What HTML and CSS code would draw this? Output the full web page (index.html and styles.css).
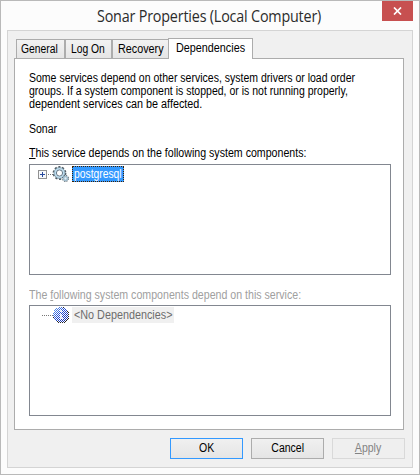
FILE: index.html
```html
<!DOCTYPE html>
<html lang="en">
<head>
<meta charset="utf-8">
<title>Sonar Properties (Local Computer)</title>
<link rel="stylesheet" href="styles.css">
</head>
<body>
<div class="window">
  <header class="titlebar">
    <h1 class="title">Sonar Properties (Local Computer)</h1>
    <button class="close" aria-label="Close">
      <svg width="9" height="8" viewBox="0 0 9 8"><path d="M1 .5 8 7.5M8 .5 1 7.5" stroke="#fff" stroke-width="1.7"/></svg>
    </button>
  </header>
  <main class="client">
    <nav class="tabs">
      <span class="tab general"><span class="t tight">General</span></span>
      <span class="tab logon"><span class="t tight">Log On</span></span>
      <span class="tab recovery"><span class="t wide">Recovery</span></span>
      <span class="tab active"><span class="t wide">Dependencies</span></span>
    </nav>
    <section class="panel">
      <div class="intro">
        <div class="t">Some services depend on other services, system drivers or load order</div>
        <div class="t">groups. If a system component is stopped, or is not running properly,</div>
        <div class="t wide">dependent services can be affected.</div>
      </div>
      <div class="service"><span class="t">Sonar</span></div>
      <div class="label first"><span class="t mid"><u>T</u>his service depends on the following system components:</span></div>
      <div class="tree">
        <div class="node">
          <svg width="31" height="17" viewBox="0 0 31 17">
            <rect x=".5" y="4.5" width="8" height="8" fill="#f6f8fb" stroke="#919191"/>
            <path d="M2 8.500h5M4.500 6v5" stroke="#26489c"/>
            <path d="M10 8.500h5" stroke="#777" stroke-dasharray="1 1"/>
            <circle cx="21.500" cy="7" r="6" fill="none" stroke="#4e5962" stroke-width="1.800" stroke-dasharray="2.100 1.670"/>
            <circle cx="21.500" cy="7" r="4.500" fill="#f8fcff" stroke="#b9d9ec" stroke-width="2.200"/>
            <circle cx="21.500" cy="7" r="5.500" fill="none" stroke="#657d8c" stroke-width=".6"/>
            <circle cx="21.500" cy="7" r="3.100" fill="#fff" stroke="#52697a" stroke-width=".9"/>
            <circle cx="27.500" cy="12.500" r="2.700" fill="none" stroke="#54616a" stroke-width="1.500" stroke-dasharray="1.300 .82"/>
            <circle cx="27.500" cy="12.500" r="1.900" fill="#e4eef5" stroke="#9fbccd" stroke-width="1.500"/>
          </svg>
          <span class="item selected"><span class="t tight">postgresql</span></span>
        </div>
      </div>
      <div class="label second"><span class="t mid">The <u>f</u>ollowing system components depend on this service:</span></div>
      <div class="tree">
        <div class="node">
          <svg width="31" height="17" viewBox="0 0 31 17">
            <defs>
              <pattern id="dither" width="2" height="2" patternUnits="userSpaceOnUse"><path d="M0 0h1v1H0zM1 1h1v1H1z" fill="#fff"/></pattern>
              <linearGradient id="blue" x2="1" y2="1"><stop stop-color="#6faaf5"/><stop offset=".5" stop-color="#2149d2"/><stop offset="1" stop-color="#18299d"/></linearGradient>
            </defs>
            <path d="M4 8.500h11" stroke="#777" stroke-dasharray="1 1"/>
            <g shape-rendering="crispEdges">
              <path d="M20 0h6v1h2v1h1v1h1v2h1v7h-1v2h-1v1h-1v1h-9v-1h-1v-1h-1v-1h-1v-2h-1V5h1V3h1V2h1V1h2z" fill="#222"/>
              <path d="M20 0h5v1h2v1h1v1h1v2h1v6h-1v2h-1v1h-2v1h-6v-1h-2v-1h-1v-1h-1v-2h-1V5h1V3h1V2h1V1h2z" fill="url(#blue)"/>
              <path d="M22 3h2v2h-2zM22 7h2v4h1v1h-4v-1h1z" fill="#fff" opacity=".8"/>
              <path d="M15 0h16v16H15z" fill="url(#dither)"/>
            </g>
          </svg>
          <span class="item inactive"><span class="t wide">&lt;No Dependencies&gt;</span></span>
        </div>
      </div>
    </section>
    <footer class="actions">
      <button class="btn default"><span class="t">OK</span></button>
      <button class="btn"><span class="t">Cancel</span></button>
      <button class="btn" disabled><span class="t"><u>A</u>pply</span></button>
    </footer>
  </main>
</div>
</body>
</html>
```
FILE: styles.css
```css
* { box-sizing: border-box; }
body { margin: 0; font: 12px/13px "Liberation Sans", Arial, sans-serif; color: #000; }
button { font: inherit; padding: 0; }
u { text-decoration: underline; text-underline-offset: 1px; text-decoration-thickness: 1px; }
.t { display: block; width: max-content; transform: scaleX(.876); transform-origin: 0 50%; }
.t.tight { transform: scaleX(.86); }
.t.mid { transform: scaleX(.885); }
.t.wide { transform: scaleX(.9); }
.window { width: 420px; height: 475px; background: #fcfcfc; border: 1px solid #b9b9b9; }
.titlebar { height: 29px; position: relative; }
.title { margin: 0 0 0 96px; width: max-content; font: 15.5px/30px "Open Sans", "Noto Sans", sans-serif; color: #2b2b2b; white-space: nowrap; letter-spacing: -.2px; transform: scaleX(.925); transform-origin: 0 50%; }
.close { position: absolute; top: 0; right: 6px; width: 31px; height: 20px; border: 0; background: #c75050; display: grid; place-items: center; }
.client { width: 406px; height: 438px; margin-left: 6px; background: #f0f0f0; border: 1px solid #d4d4d4; padding: 7px 0 0 6px; }
.tabs { display: flex; align-items: flex-end; height: 21px; padding-left: 2px; margin-bottom: -1px; }
.tab { height: 19px; margin-bottom: 1px; border: 1px solid #acacac; border-bottom: 0; background: linear-gradient(#f2f2f2, #e5e5e5); line-height: 19px; padding-left: 4px; white-space: nowrap; }
.general { width: 49px; }
.logon { width: 47px; padding-left: 5px; }
.recovery { width: 57px; padding-left: 5px; border-right: 0; }
.active { width: 85px; height: 21px; margin: 0 0 0 -1px; background: #fff; padding-left: 7px; line-height: 19px; position: relative; }
.panel { width: 390px; height: 372px; background: #fff; border: 1px solid #acacac; padding: 13px 0 0 14px; white-space: nowrap; }
.service { margin-top: 12px; }
.label { height: 13px; }
.first { margin-top: 11px; }
.second { margin-top: 14px; color: #a0a0a0; }
.tree { width: 362px; height: 111px; margin-top: 4px; border: 1px solid #828790; }
.second + .tree { margin-top: 3px; }
.node { display: flex; padding: 1px 0 0 8px; }
.item { height: 16px; line-height: 16px; margin-left: 3px; padding-left: 2px; }
.selected { width: 52px; background: #3399ff; color: #fff; outline: 1px dotted #402000; outline-offset: -1px; }
.inactive { width: 102px; background: #f0f0f0; color: #6d6d6d; }
.actions { display: flex; gap: 8px; padding: 8px 0 0 156px; }
.btn { width: 73px; height: 21px; border: 1px solid #acacac; background: linear-gradient(#f0f0f0, #e5e5e5); color: #000; line-height: 19px; }
.btn .t { margin: 0 auto; transform-origin: 50% 50%; }
.default { border-color: #3399ff; }
.btn:disabled { border-color: #d9d9d9; background: #efefef; color: #838383; }
```
